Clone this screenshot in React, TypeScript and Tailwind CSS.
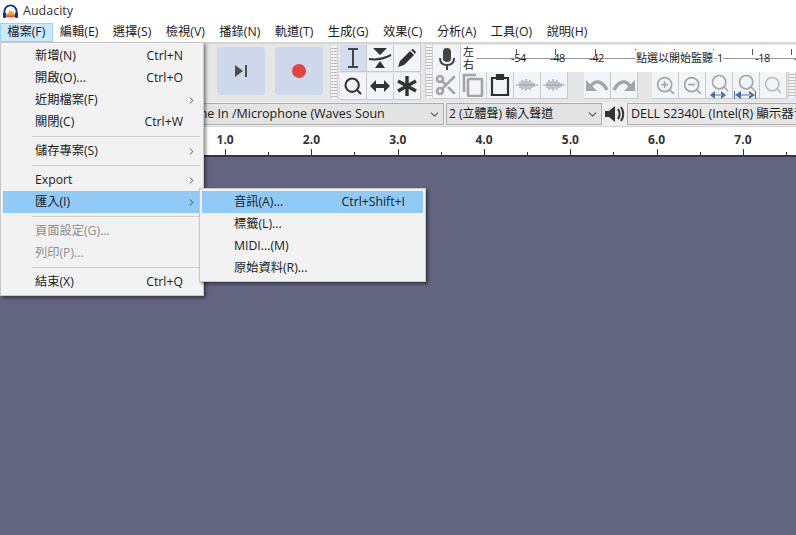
import React from "react";
import { ChevronDown, ChevronRight, Scissors, Search, ZoomIn, ZoomOut } from "lucide-react";

const font = "font-['Open_Sans','Noto_Sans_CJK_TC',sans-serif]";
const ticks = [0, 1, 2, 3, 4, 5, 6, 7];

const Logo = () => (
  <svg width="17" height="16" viewBox="0 0 18 17">
    <path d="M2.5 11V8a6.5 6.5 0 0 1 13 0v3" fill="none" stroke="#1f2f80" strokeWidth="2" />
    <path d="M5 12l1-3 1 1 1-4 1 3 1-3 1 3 1-1 1 4H5z" fill="#f59a23" />
    <path d="M4 12h10l-1 2H5z" fill="#e8482c" />
    <rect x="1" y="9" width="3.5" height="6" rx="1.5" fill="#1f2f80" />
    <rect x="13.5" y="9" width="3.5" height="6" rx="1.5" fill="#1f2f80" />
  </svg>
);

const Grip = ({ h }: { h: string }) => (
  <div className={`${h} w-[8px] shrink-0 border-x border-[#d0d0d0] bg-[repeating-linear-gradient(180deg,#f4f4f4_0px,#f4f4f4_2px,#bdbdbd_2px,#bdbdbd_3px)]`} />
);

const Cell = ({ children, active }: { children: React.ReactNode; active?: boolean }) => (
  <div className={`flex h-[27px] w-[27px] items-center justify-center border-r border-b border-[#c9c9c9] ${active ? "bg-[#d2ddf0]" : "bg-[#f1f4f9]"}`}>
    {children}
  </div>
);

const Wave = ({ color }: { color: string }) => (
  <svg width="22" height="14" viewBox="0 0 22 14" stroke={color} strokeWidth="1.2">
    <path d="M0 7h22M4 4v6M6 2v10M8 3v8M10 1v12M12 3v8M14 2v10M16 4v6M18 5v4" />
  </svg>
);

const ZoomExtra = ({ kind }: { kind: "fit" | "width" }) => (
  <div className="relative h-[24px] w-[24px]">
    <Search size={20} strokeWidth={2} color="#a6a6a6" className="ml-[3px]" />
    <svg className="absolute bottom-[-2px] left-[-1px]" width="26" height="8" viewBox="0 0 26 8" fill="#4a6ea5">
      {kind === "fit" ? (
        <path d="M4 4l5-4v8zM20 4l-5-4v8z M8 3.4h8v1.2H8z" />
      ) : (
        <path d="M1 0h1v8H1zM22 0h1v8h-1zM2 4l6-4v8zM22 4l-6-4v8zM8 3.4h10v1.2H8z" />
      )}
    </svg>
  </div>
);

const MenuItem = ({ label, keys, arrow, active, off }: { label: string; keys?: string; arrow?: boolean; active?: boolean; off?: boolean }) => (
  <div className={`flex h-[22px] items-center pl-[32px] pr-[18px] ${active ? "bg-[#91c9f7]" : ""} ${off ? "text-[#8d8d8d]" : "text-[#1a1a1a]"}`}>
    <span className="flex-1 whitespace-nowrap">{label}</span>
    {keys && <span>{keys}</span>}
    {arrow && <ChevronRight size={11} className="mr-[-14px]" color="#444" />}
  </div>
);

const Sep = () => (
  <div className="flex h-[7px] items-center pl-[29px] pr-[1px]">
    <div className="h-px w-full bg-[#cfcfcf]" />
  </div>
);

export default function App() {
  return (
    <div className={`${font} relative flex h-[535px] w-[796px] flex-col overflow-hidden bg-[#626480] text-[12.25px] text-[#1a1a1a]`}>
      <div className="flex h-[23px] items-center gap-[4px] bg-white pl-[2px] text-[12.5px] text-[#333]">
        <Logo />
        <span>Audacity</span>
      </div>

      <div className="flex h-[19px] items-center bg-white">
        {["檔案(F)", "編輯(E)", "選擇(S)", "檢視(V)", "播錄(N)", "軌道(T)", "生成(G)", "效果(C)", "分析(A)", "工具(O)", "說明(H)"].map((m, i) => (
          <div key={m} className={`flex h-[19px] shrink-0 items-center whitespace-nowrap border px-[6.25px] ${i === 0 ? "border-[#99d1ff] bg-[#cce8ff]" : "border-transparent"}`}>
            {m}
          </div>
        ))}
      </div>

      <div className="flex h-[60px] border-t-2 border-[#d5d5d5] bg-[#e6e6e6]">
        <div className="flex gap-[10px] pl-[217px] pt-[3px]">
          <div className="flex h-[48px] w-[48px] items-center justify-center rounded-[4px] bg-[#cdd8ec]">
            <svg width="14" height="14" viewBox="0 0 14 14" fill="#4d4d4d">
              <path d="M1 1l8 6-8 6zM11 1h2v12h-2z" />
            </svg>
          </div>
          <div className="flex h-[48px] w-[48px] items-center justify-center rounded-[4px] bg-[#cdd8ec]">
            <div className="h-[14px] w-[14px] rounded-full bg-[#e04545]" />
          </div>
        </div>

        <div className="ml-[7px] mt-[2px]">
          <Grip h="h-[53px]" />
        </div>

        <div className="ml-[2px] mt-[1px] grid h-[55px] grid-cols-[repeat(3,27px)]">
          <Cell active>
            <svg width="14" height="20" viewBox="0 0 14 20" fill="none" stroke="#444" strokeWidth="2">
              <path d="M2 1h10M2 19h10M7 1v18" />
            </svg>
          </Cell>
          <Cell>
            <svg width="24" height="22" viewBox="0 0 24 22" fill="#333">
              <path d="M5 1h14l-7 7zM7 21l5-7 5 7z" />
              <path d="M1 12c6 1 14 0 22-4" fill="none" stroke="#333" strokeWidth="2" />
            </svg>
          </Cell>
          <Cell>
            <svg width="20" height="20" viewBox="0 0 20 20" fill="#333">
              <path d="M14 2l2-1 3 3-1 2zM13 3l4 4L7 17l-6 2 2-6z" />
            </svg>
          </Cell>
          <Cell>
            <Search size={20} strokeWidth={2.5} color="#333" />
          </Cell>
          <Cell>
            <svg width="22" height="14" viewBox="0 0 22 14" fill="#333">
              <path d="M1 7l6-6v4h8V1l6 6-6 6V9H7v4z" />
            </svg>
          </Cell>
          <Cell>
            <svg width="22" height="22" viewBox="0 0 22 22" stroke="#333" strokeWidth="3.4">
              <path d="M11 1v20M2 6l18 10M20 6L2 16" />
            </svg>
          </Cell>
        </div>

        <div className="ml-[4px] flex min-w-0 flex-1 flex-col">
          <div className="flex h-[28px] pt-[1px]">
            <Grip h="h-[26px]" />
            <div className="flex w-[28px] items-center justify-center border-r border-[#c9c9c9] bg-[#f1f4f9]">
              <svg width="18" height="24" viewBox="0 0 18 24" fill="#444">
                <rect x="5" y="1" width="8" height="14" rx="4" />
                <path d="M2 11c0 5 3 7 7 7s7-2 7-7" fill="none" stroke="#444" strokeWidth="2" />
                <path d="M8 18h2v5H8z" />
              </svg>
            </div>
            <div className="flex w-[15px] flex-col items-center whitespace-nowrap bg-white text-[11px] leading-[13px]">
              <span>左</span>
              <span>右</span>
            </div>
            <div className="relative flex-1 bg-white">
              <div className="absolute left-0 right-0 top-[13px] h-px bg-[#9a9a9a]" />
              <svg className="absolute left-0 top-[2px]" width="320" height="22" stroke="#555">
                <path d="M40.5 2v6M79.5 2v6M119.5 2v6M159.5 2v6M198.5 2v6M237.5 2v6M276.5 2v6M315.5 2v6" />
              </svg>
              <div className="absolute left-[23px] top-[5px] flex whitespace-nowrap text-[11px] leading-[16px] tracking-[-0.3px] text-[#222]">
                <span className="w-[39px] text-center">-54</span>
                <span className="w-[39px] text-center">-48</span>
                <span className="w-[39px] text-center">-42</span>
                <span className="ml-[19px] bg-white px-[1px] tracking-normal">點選以開始監聽</span>
                <span className="ml-[3px] bg-white">1</span>
                <span className="ml-[20px] w-[39px] text-center">-18</span>
                <span className="w-[39px] text-center">-12</span>
              </div>
            </div>
          </div>
          <div className="flex h-[28px]">
            <Grip h="h-[26px]" />
            <div className="flex">
              <Cell>
                <Scissors size={24} strokeWidth={2.6} color="#a4a4a4" />
              </Cell>
              <Cell>
                <svg width="22" height="24" viewBox="0 0 22 24" fill="none" stroke="#a4a4a4" strokeWidth="2.6">
                  <path d="M14 2H2v17" />
                  <rect x="6" y="6" width="14" height="17" rx="1" />
                </svg>
              </Cell>
              <Cell>
                <svg width="20" height="24" viewBox="0 0 20 24" fill="none" stroke="#2e2e2e" strokeWidth="2.2">
                  <path d="M6 5H2v17h16V5h-4" />
                  <path d="M7 2h6v4H7z" fill="#2e2e2e" />
                </svg>
              </Cell>
              <Cell>
                <Wave color="#9aa3ad" />
              </Cell>
              <Cell>
                <Wave color="#9aa3ad" />
              </Cell>
            </div>
            <div className="ml-[16px] flex">
              <Cell>
                <svg width="24" height="16" viewBox="0 0 24 16" fill="#a4a4a4">
                  <path d="M1 3v11h11z" />
                  <path d="M6 9C10 3 17 3 22 13" fill="none" stroke="#a4a4a4" strokeWidth="3.4" />
                </svg>
              </Cell>
              <Cell>
                <svg width="24" height="16" viewBox="0 0 24 16" fill="#a4a4a4">
                  <path d="M23 3v11H12z" />
                  <path d="M18 9C14 3 7 3 2 13" fill="none" stroke="#a4a4a4" strokeWidth="3.4" />
                </svg>
              </Cell>
            </div>
            <div className="ml-[14px] flex">
              <Cell>
                <ZoomIn size={21} strokeWidth={2} color="#a6a6a6" />
              </Cell>
              <Cell>
                <ZoomOut size={21} strokeWidth={2} color="#a6a6a6" />
              </Cell>
              <Cell>
                <ZoomExtra kind="fit" />
              </Cell>
              <Cell>
                <ZoomExtra kind="width" />
              </Cell>
              <Cell>
                <Search size={20} strokeWidth={2} color="#bdbdbd" />
              </Cell>
            </div>
            <div className="ml-[1px]">
              <Grip h="h-[26px]" />
            </div>
          </div>
        </div>
      </div>

      <div className="flex h-[25px] items-center border-b border-[#d5d5d5] bg-[#eeeeee]">
        <div className="ml-[170px] flex h-[22px] w-[274px] items-center justify-between border border-[#adadad] bg-[#e3e3e3] pl-[19px] pr-[2px] text-[12.5px]">
          <span className="whitespace-nowrap">Line In /Microphone (Waves Soun</span>
          <ChevronDown size={13} color="#555" />
        </div>
        <div className="ml-[2px] flex h-[22px] w-[156px] items-center justify-between border border-[#adadad] bg-[#e3e3e3] pl-[2px] pr-[2px] text-[12px]">
          <span>2 (立體聲) 輸入聲道</span>
          <ChevronDown size={13} color="#555" />
        </div>
        <svg className="mx-[2px] shrink-0" width="21" height="20" viewBox="0 0 21 20" fill="#333">
          <path d="M1 7h4l6-5v16l-6-5H1z" />
          <path d="M14 5c2 3 2 7 0 10M17 3c3 4 3 10 0 14" fill="none" stroke="#333" strokeWidth="2" />
        </svg>
        <div className="flex h-[22px] flex-1 items-center overflow-hidden whitespace-nowrap border border-[#adadad] border-r-0 bg-[#e8e8e8] pl-[3px] text-[12.5px]">
          DELL S2340L (Intel(R) 顯示器音
        </div>
      </div>

      <div className="relative h-[30px] border-b-2 border-[#34354a] bg-white">
        <div className="flex pl-[182px] pt-[5px] text-[12px] font-bold leading-[16px] text-[#333]">
          {ticks.slice(1).map((t) => (
            <span key={t} className="w-[86.3px] shrink-0 text-center">
              {t}.0
            </span>
          ))}
        </div>
        <svg className="absolute bottom-0 left-[182px]" width="614" height="7" stroke="#333">
          {ticks.map((t) => (
            <g key={t}>
              <path d={`M${Math.round(43 + t * 86.3) + 0.5} 1v6`} />
              <path d={`M${Math.round(86 + t * 86.3) + 0.5} 4v3`} />
            </g>
          ))}
        </svg>
      </div>

      <div className="absolute left-0 top-[42px] w-[204px] border border-[#c8c8c8] bg-[#f2f2f2] p-[2px] shadow-[2px_2px_3px_rgba(0,0,0,0.45)]">
        <MenuItem label="新增(N)" keys="Ctrl+N" />
        <MenuItem label="開啟(O)..." keys="Ctrl+O" />
        <MenuItem label="近期檔案(F)" arrow />
        <MenuItem label="關閉(C)" keys="Ctrl+W" />
        <Sep />
        <MenuItem label="儲存專案(S)" arrow />
        <Sep />
        <MenuItem label="Export" arrow />
        <MenuItem label="匯入(I)" arrow active />
        <Sep />
        <MenuItem label="頁面設定(G)..." off />
        <MenuItem label="列印(P)..." off />
        <Sep />
        <MenuItem label="結束(X)" keys="Ctrl+Q" />
      </div>

      <div className="absolute left-[199px] top-[188px] w-[227px] border border-[#c8c8c8] bg-[#f2f2f2] p-[2px] shadow-[2px_2px_3px_rgba(0,0,0,0.45)]">
        <MenuItem label="音訊(A)..." keys="Ctrl+Shift+I" active />
        <MenuItem label="標籤(L)..." />
        <MenuItem label="MIDI...(M)" />
        <MenuItem label="原始資料(R)..." />
      </div>
    </div>
  );
}
